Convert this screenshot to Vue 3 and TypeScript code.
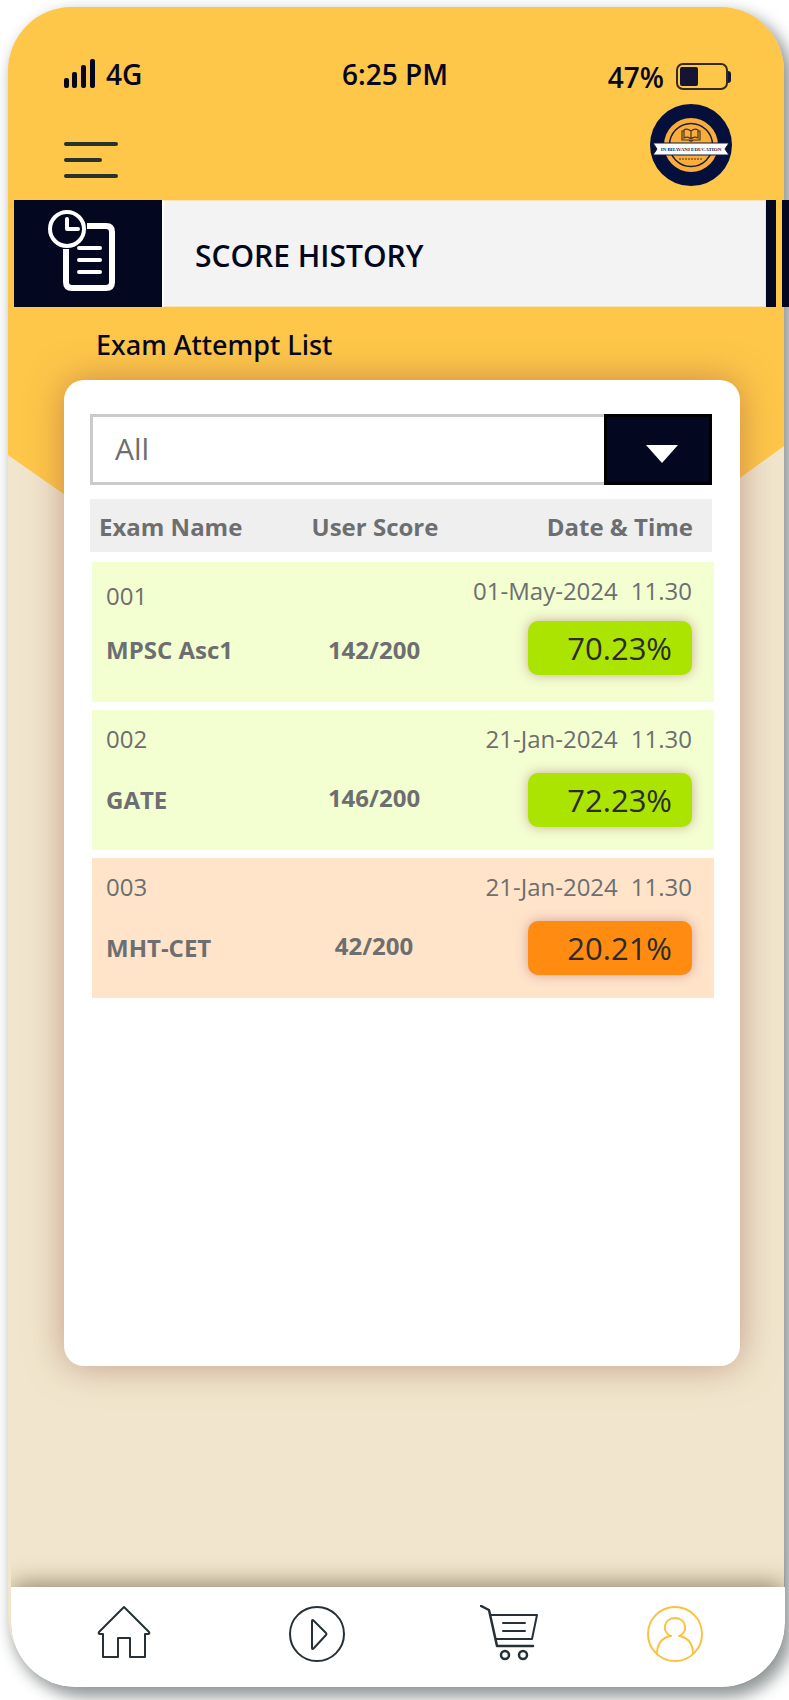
<script setup lang="ts">
import { ref } from 'vue'

interface Attempt {
  id: string
  name: string
  score: string
  date: string
  time: string
  percent: string
  passed: boolean
}

const filter = ref('All')

const attempts: Attempt[] = [
  { id: '001', name: 'MPSC Asc1', score: '142/200', date: '01-May-2024', time: '11.30', percent: '70.23%', passed: true },
  { id: '002', name: 'GATE', score: '146/200', date: '21-Jan-2024', time: '11.30', percent: '72.23%', passed: true },
  { id: '003', name: 'MHT-CET', score: '42/200', date: '21-Jan-2024', time: '11.30', percent: '20.21%', passed: false },
]
</script>

<template>
  <div class="phone">
    <header class="top">
      <div class="status">
        <span class="network">
          <svg class="signal" width="32" height="30" viewBox="0 0 32 30" aria-hidden="true">
            <g fill="#050620">
              <rect x="0" y="19" width="5" height="10" rx="2" />
              <rect x="8" y="13" width="5" height="16" rx="2" />
              <rect x="17" y="6" width="5" height="23" rx="2" />
              <rect x="26" y="0" width="5" height="29" rx="2" />
            </g>
          </svg>
          4G
        </span>
        <span class="clock">6:25 PM</span>
        <span class="power">
          47%
          <svg width="56" height="28" viewBox="0 0 56 28" aria-hidden="true">
            <rect x="1" y="1" width="50" height="25" rx="6" fill="none" stroke="#33291f" stroke-width="2" />
            <rect x="4" y="4" width="18" height="19" rx="2" fill="#161433" />
            <path d="M52 8 Q55 8 55 11 V17 Q55 20 52 20 Z" fill="#161433" />
          </svg>
        </span>
      </div>
      <div class="actions">
        <button class="menu" type="button" aria-label="Menu">
          <svg width="54" height="36" viewBox="0 0 54 36" aria-hidden="true">
            <path d="M2 2 H52 M2 18 H36 M2 34 H52" stroke="#27322c" stroke-width="4" stroke-linecap="round" />
          </svg>
        </button>
        <svg class="logo" width="82" height="82" viewBox="0 0 82 82" role="img" aria-label="Bhavani Education">
          <circle cx="41" cy="41" r="41" fill="#04103b" />
          <circle cx="41" cy="41" r="27" fill="#f9ae3b" />
          <circle cx="41" cy="41" r="21.500" fill="none" stroke="#1d1c35" stroke-width="1.500" />
          <path d="M41 27 Q37 24 34 26 V34 Q38 32 41 35 Q44 32 48 34 V26 Q45 24 41 27 V35 M34 27 H32 V36 H39 Q41 38 43 36 H50 V27 H48" fill="none" stroke="#4a3523" stroke-width="1.200" />
          <path d="M29 55 H53" stroke="#8b5b2b" stroke-width="1.500" stroke-dasharray="2 1" />
          <path d="M3 39 H79 L75 45 L79 51 H3 L7 45 Z" fill="#fff" stroke="#10183f" stroke-width="1" />
          <text x="41" y="47" text-anchor="middle" class="logo-text">IN BHAVANI EDUCATION</text>
        </svg>
      </div>
    </header>

    <div class="banner">
      <div class="banner-icon">
        <svg width="68" height="82" viewBox="0 0 68 82" fill="none" stroke="#fff" stroke-linecap="round" stroke-linejoin="round" aria-hidden="true">
          <path d="M39 16 H58 Q64 16 64 22 V72 Q64 78 58 78 H24 Q18 78 18 72 V39" stroke-width="6" stroke-linecap="butt" />
          <circle cx="19" cy="19" r="17" stroke-width="4" />
          <path d="M19 9 V19 H30" stroke-width="4" />
          <path d="M31 38 H52 M31 50 H52 M31 62 H52" stroke-width="4" />
        </svg>
      </div>
      <h1 class="banner-title">SCORE HISTORY</h1>
      <span class="banner-end"></span>
      <span class="banner-next"></span>
    </div>

    <main class="content">
      <h2 class="subtitle">Exam Attempt List</h2>
      <section class="card">
        <div class="picker">
          <select v-model="filter" aria-label="Filter exams">
            <option>All</option>
            <option>Passed</option>
            <option>Failed</option>
          </select>
          <span class="picker-arrow" aria-hidden="true">
            <svg width="32" height="18" viewBox="0 0 32 18"><path d="M0 0 H32 L16 18 Z" fill="#fff" /></svg>
          </span>
        </div>
        <table>
          <thead>
            <tr>
              <th scope="col">Exam Name</th>
              <th scope="col" class="center">User Score</th>
              <th scope="col" class="end">Date &amp; Time</th>
            </tr>
          </thead>
          <tbody>
            <tr v-for="a in attempts" :key="a.id" :class="a.passed ? 'pass' : 'fail'">
              <td>
                <span class="meta">{{ a.id }}</span>
                <span class="strong">{{ a.name }}</span>
              </td>
              <td class="center"><span class="strong">{{ a.score }}</span></td>
              <td class="end">
                <span class="meta when"><span>{{ a.date }}</span><span>{{ a.time }}</span></span>
                <span class="badge">{{ a.percent }}</span>
              </td>
            </tr>
          </tbody>
        </table>
      </section>
    </main>

    <nav class="tabs" aria-label="Main">
      <a href="#home" aria-label="Home">
        <svg width="58" height="58" viewBox="0 0 58 58">
          <path d="M29 2 L54 27 Q55 29 53 29 H50 V52 H35 V33 H23 V52 H8 V29 H5 Q3 29 4 27 Z" />
        </svg>
      </a>
      <a href="#play" aria-label="Play">
        <svg width="58" height="58" viewBox="0 0 58 58">
          <circle cx="29" cy="29" r="27" />
          <path d="M24 16 Q24 14 26 16 L38 28 Q39 29 38 30 L26 43 Q24 45 24 43 Z" />
        </svg>
      </a>
      <a href="#cart" aria-label="Cart">
        <svg width="58" height="58" viewBox="0 0 58 58">
          <path d="M1 1 L9 5 L17 41 H53" stroke-width="2.500" />
          <path d="M10 10 H57 L52 34 H16 M23 18 H45 M23 26 H45" />
          <circle cx="25" cy="50" r="4" stroke-width="2.500" />
          <circle cx="43" cy="50" r="4" stroke-width="2.500" />
        </svg>
      </a>
      <a href="#profile" class="active" aria-label="Profile" aria-current="page">
        <svg width="58" height="58" viewBox="0 0 58 58">
          <circle cx="29" cy="29" r="27" />
          <path d="M11 49 C11 39 16 33 24 31 H25 C15 27 18 13 29 13 C40 13 43 27 33 31 H34 C42 33 47 39 47 49" />
        </svg>
      </a>
    </nav>
  </div>
</template>

<style>
body {
  margin: 0;
  background: #fff;
  overflow-x: hidden;
}
</style>

<style scoped>
* {
  box-sizing: border-box;
}

.phone {
  position: relative;
  isolation: isolate;
  margin: 7px 5px 13px 8px;
  border-radius: 64px 64px 64px 72px;
  background: #f1e6cd;
  box-shadow: 6px 8px 16px 2px #8f9595;
  font-family: "Open Sans", "Noto Sans", sans-serif;
  color: #050620;
}

.phone::before {
  content: "";
  position: absolute;
  z-index: -1;
  inset: 0 0 auto;
  height: 720px;
  border-radius: 64px 64px 0 0;
  background: #fec749;
  clip-path: polygon(0 0, 100% 0, 100% 439px, 50% 100%, 0 448px);
}

.top {
  padding: 46px 52px 0 56px;
}

.status {
  display: grid;
  grid-template-columns: 1fr auto 1fr;
  align-items: center;
  height: 40px;
  font-size: 28px;
  font-weight: 600;
  line-height: 36px;
}

.network,
.power {
  display: flex;
  align-items: center;
  gap: 12px;
}

.network {
  gap: 10px;
}

.clock {
  padding-right: 6px;
}

.power {
  justify-content: flex-end;
  padding-top: 6px;
}

.actions {
  display: flex;
  align-items: flex-start;
  justify-content: space-between;
  height: 107px;
  padding-top: 11px;
}

.menu {
  display: flex;
  padding: 38px 0 0;
  border: 0;
  background: none;
}

.logo-text {
  font: 700 5px "Liberation Serif", serif;
  fill: #10183f;
}

.banner {
  display: flex;
  height: 107px;
  margin: 0 -5px 0 6px;
}

.banner-icon {
  display: flex;
  align-items: center;
  justify-content: center;
  width: 148px;
  padding-right: 12px;
  padding-bottom: 6px;
  background: #040720;
}

.banner-title {
  flex: 1;
  margin: 0;
  padding: 4px 0 0 31px;
  border: 1px solid #f8e3bb;
  border-left: 2px solid #fff;
  background: #f3f3f3;
  font-size: 30px;
  font-weight: 600;
  line-height: 101px;
}

.banner-end {
  width: 10px;
  background: #040720;
}

.banner-next {
  width: 7px;
  margin-left: 6px;
  background: #040720;
}

.content {
  padding: 0 44px 221px 56px;
}

.subtitle {
  margin: 0;
  padding: 20px 0 17px 32px;
  font-family: "Noto Sans", "Open Sans", sans-serif;
  font-size: 27px;
  font-weight: 500;
  line-height: 36px;
}

.card {
  min-height: 986px;
  padding: 34px 28px 34px 26px;
  border-radius: 20px;
  background: #fff;
  box-shadow: 0 0 36px rgba(150, 80, 70, 0.5);
}

.picker {
  display: grid;
  height: 71px;
  color: #6d6e70;
}

.picker select {
  grid-area: 1 / 1;
  width: 100%;
  padding: 0 132px 2px 22px;
  border: 3px solid #cacaca;
  border-radius: 0;
  appearance: none;
  background: #fff;
  font: inherit;
  font-size: 30px;
  color: inherit;
}

.picker-arrow {
  grid-area: 1 / 1;
  justify-self: end;
  display: flex;
  align-items: center;
  justify-content: center;
  width: 108px;
  padding-top: 8px;
  padding-left: 8px;
  border: 3px solid #000;
  background: #040720;
  pointer-events: none;
}

table,
thead,
tbody {
  display: block;
}

table {
  margin-top: 14px;
  font-size: 24px;
  color: #6d6e70;
}

tr {
  display: grid;
  grid-template-columns: minmax(0, 1fr) 160px 238px;
}

th {
  padding: 0;
  font-weight: 700;
  line-height: 53px;
  text-align: left;
  white-space: nowrap;
}

thead tr {
  padding: 1px 19px 0 9px;
  margin-bottom: 10px;
  background: #efefef;
  height: 53px;
}

tbody {
  display: grid;
  gap: 8px;
  margin: 0 -2px 0 2px;
}

tbody tr {
  height: 140px;
  padding: 12px 22px 0 14px;
}

td {
  display: flex;
  flex-direction: column;
  gap: 17px;
  padding: 0;
}

.pass {
  background: #f3fed1;
}

.fail {
  background: #ffe4ca;
}

th.center {
  text-align: center;
}

th.end {
  text-align: right;
}

td.center {
  align-items: center;
  padding-top: 49px;
}

td.end {
  align-items: flex-end;
}

tbody tr:first-child td {
  gap: 13px;
}

tbody tr:first-child td:first-child {
  gap: 10px;
  padding-top: 5px;
}

.meta {
  line-height: 34px;
}

.when {
  display: flex;
  gap: 13px;
  white-space: nowrap;
}

.strong {
  font-weight: 700;
  line-height: 54px;
  white-space: nowrap;
}

.badge {
  width: 164px;
  padding-right: 20px;
  border-radius: 10px;
  background: #ace402;
  box-shadow: 0 0 12px rgba(150, 80, 90, 0.45);
  font-size: 31px;
  line-height: 54px;
  text-align: right;
  color: #2b2b2b;
}

.fail .badge {
  background: #ff8c10;
}

.tabs {
  display: grid;
  grid-template-columns: 193fr 193fr 191fr 141fr;
  place-items: center;
  height: 100px;
  margin: 0 -1px 0 3px;
  padding: 0 40px 6px 16px;
  border-radius: 0 0 64px 64px;
  background: #fff;
  box-shadow: 0 -4px 24px -2px rgba(90, 80, 50, 0.7);
  clip-path: inset(-40px 0 0 0 round 0 0 64px 64px);
}

.tabs a {
  display: flex;
  color: #263036;
}

.tabs .active {
  color: #fbc140;
}

.tabs svg {
  fill: none;
  stroke: currentColor;
  stroke-width: 2;
  stroke-linecap: round;
  stroke-linejoin: round;
}
</style>
